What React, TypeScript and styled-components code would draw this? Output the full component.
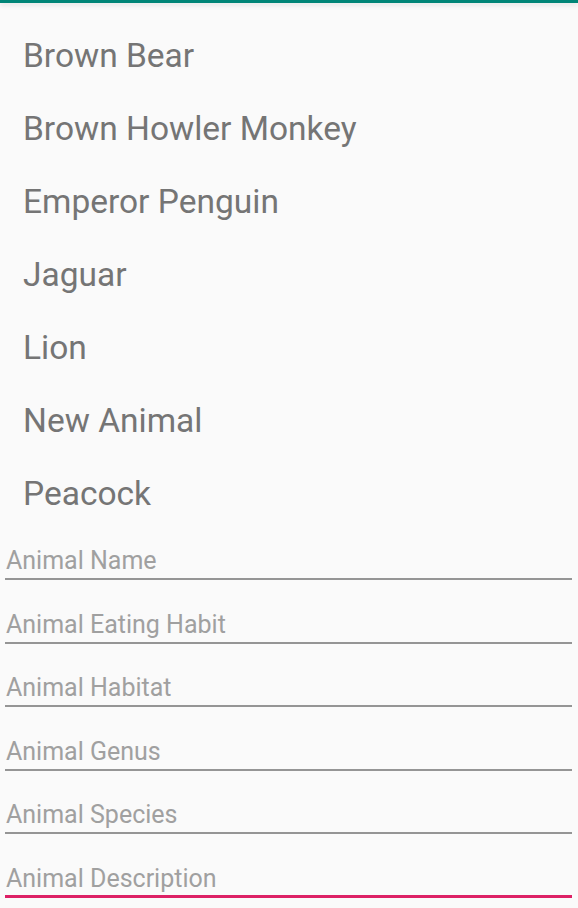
import React from 'react'
import styled, { createGlobalStyle } from 'styled-components'

const GlobalStyle = createGlobalStyle`
    html, body {
        margin: 0;
        padding: 0;
        background: #fafafa;
    }
    body {
        font-family: Roboto, 'Liberation Sans', sans-serif;
        -webkit-font-smoothing: antialiased;
    }
`

const Screen = styled.div`
    position: relative;
    width: 578px;
    height: 908px;
    background: #fafafa;
    overflow: hidden;
`

const StatusStrip = styled.div`
    height: 3px;
    background: #008577;
    box-shadow: 0 2px 5px rgba(0, 0, 0, 0.12);
`

const AnimalList = styled.ul`
    list-style: none;
    margin: 0;
    padding: 0;
`

const AnimalItem = styled.li`
    box-sizing: border-box;
    height: 73px;
    padding: 31px 0 0 23px;
    display: flex;
    align-items: center;
    font-size: 33.5px;
    color: #757575;
`

const Form = styled.form`
    padding: 2.4px 6px 0 5px;
`

const Field = styled.div<{ $focused?: boolean }>`
    box-sizing: border-box;
    height: 63.6px;
    display: flex;
    align-items: flex-end;
    padding: 0 0 ${(p) => (p.$focused ? '2px' : '3px')} 1px;
    border-bottom: ${(p) => (p.$focused ? '3px solid #dd2166' : '2px solid #959595')};
`

const Hint = styled.span`
    font-size: 25px;
    line-height: 28px;
    color: #a0a0a0;
`

const animals = [
    'Brown Bear',
    'Brown Howler Monkey',
    'Emperor Penguin',
    'Jaguar',
    'Lion',
    'New Animal',
    'Peacock',
]

const fields = [
    'Animal Name',
    'Animal Eating Habit',
    'Animal Habitat',
    'Animal Genus',
    'Animal Species',
    'Animal Description',
]

export default function App() {
    return (
        <>
            <GlobalStyle />
            <Screen>
                <StatusStrip />
                <AnimalList>
                    {animals.map((a) => (
                        <AnimalItem key={a}>{a}</AnimalItem>
                    ))}
                </AnimalList>
                <Form>
                    {fields.map((f, i) => (
                        <Field key={f} $focused={i === fields.length - 1}>
                            <Hint>{f}</Hint>
                        </Field>
                    ))}
                </Form>
            </Screen>
        </>
    )
}
